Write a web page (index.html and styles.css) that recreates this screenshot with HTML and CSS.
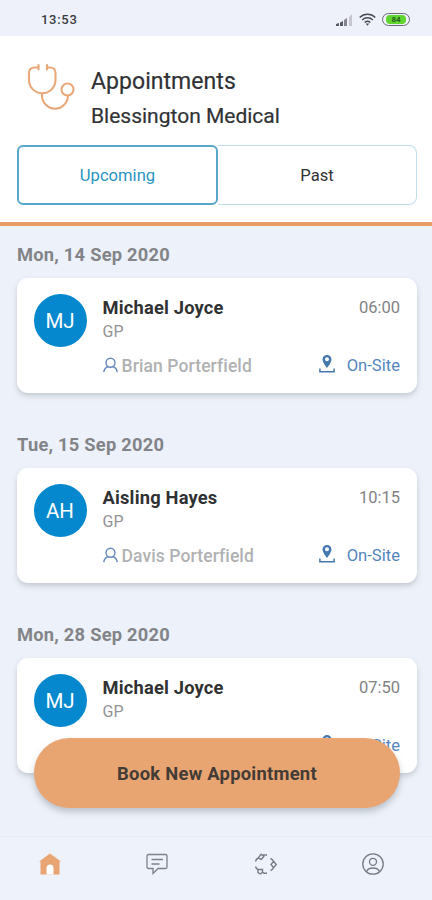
FILE: index.html
```html
<!DOCTYPE html>
<html lang="en">
<head>
<meta charset="utf-8">
<title>Appointments</title>
<link rel="stylesheet" href="styles.css">
</head>
<body>
<svg class="defs" width="0" height="0">
  <symbol id="person" viewBox="0 0 16 16"><g fill="none" stroke="currentColor" stroke-width="1.5"><circle cx="8" cy="5.6" r="4.8"/><path d="M.8 15.500c.6-3.200 2.200-5 4.600-5.900M15.200 15.500c-.6-3.200-2.200-5-4.600-5.900"/></g></symbol>
  <symbol id="pin" viewBox="0 0 16 18"><path fill="currentColor" fill-rule="evenodd" d="M8 0a4.500 4.500 0 0 0-4.500 4.500C3.500 7.500 8 13 8 13s4.500-5.500 4.500-8.500A4.500 4.500 0 0 0 8 0zm0 2.300a2 2 0 1 1 0 4 2 2 0 0 1 0-4z"/><path fill="none" stroke="currentColor" stroke-width="1.500" d="M.9 13.500v3.200h14.200v-3.200"/></symbol>
</svg>
<div class="app">
  <div class="status">
    <span class="clock">13:53</span>
    <svg class="signal" width="17" height="12" viewBox="0 0 17 12"><path fill="#555a64" d="M0 12v-2l3-1v3zM4 12V8.500L7 7v5z"/><path fill="#85868f" d="M8 12V6l3-2v8z"/><path fill="#c6c7d0" d="M13 12V3l3-3v12z"/></svg>
    <svg class="wifi" width="17" height="13" viewBox="0 0 17 13"><g fill="none" stroke="#494c53" stroke-width="1.500"><path d="M.7 4.500a11 11 0 0 1 15.600 0M3.200 7a7.500 7.500 0 0 1 10.600 0M5.700 9.500a4 4 0 0 1 5.600 0"/></g><path fill="#494c53" d="M6.700 10.500h3.600L8.500 12.700z"/></svg>
    <span class="battery"><span class="charge">84</span></span>
  </div>
  <header class="header">
    <div class="heading">
      <svg class="steth" width="48" height="48" viewBox="0 0 48 48" fill="none" stroke="#eaa878" stroke-width="2.100"><path d="M11.500 4.500H7.500Q2 4.500 2 10V17a13 13 0 0 0 26.500 0V10Q28.500 4.500 23 4.500H20"/><path d="M11.500 1.200v6M20 1.200v6M15 30v2.500a13 13.200 0 0 0 26 0"/><circle cx="40.500" cy="26.500" r="6"/></svg>
      <div class="titles"><div class="title">Appointments</div><div class="practice">Blessington Medical</div></div>
    </div>
    <div class="tabs"><div class="tab active">Upcoming</div><div class="tab past">Past</div></div>
  </header>
  <main class="list">
    <div class="date">Mon, 14 Sep 2020</div>
    <div class="card">
      <div class="avatar">MJ</div>
      <div class="info">
        <div class="row"><span class="name">Michael Joyce</span><span class="time">06:00</span></div>
        <div class="role">GP</div>
        <div class="row meta"><svg class="person"><use href="#person"/></svg><span class="patient">Brian Porterfield</span><svg class="pin"><use href="#pin"/></svg><span class="place">On-Site</span></div>
      </div>
    </div>
    <div class="date">Tue, 15 Sep 2020</div>
    <div class="card">
      <div class="avatar">AH</div>
      <div class="info">
        <div class="row"><span class="name">Aisling Hayes</span><span class="time">10:15</span></div>
        <div class="role">GP</div>
        <div class="row meta"><svg class="person"><use href="#person"/></svg><span class="patient">Davis Porterfield</span><svg class="pin"><use href="#pin"/></svg><span class="place">On-Site</span></div>
      </div>
    </div>
    <div class="date">Mon, 28 Sep 2020</div>
    <div class="card">
      <div class="avatar">MJ</div>
      <div class="info">
        <div class="row"><span class="name">Michael Joyce</span><span class="time">07:50</span></div>
        <div class="role">GP</div>
        <div class="row meta"><svg class="pin"><use href="#pin"/></svg><span class="place">On-Site</span></div>
      </div>
    </div>
  </main>
  <nav class="nav">
    <svg width="22" height="22" viewBox="0 0 22 22"><path fill="#e9a473" d="M11 .5L22 8.500H20.500V21.500H1.500V8.500H0z"/><path fill="#fff" d="M7.500 21.500V15a3.500 3.500 0 0 1 7 0v6.500z"/></svg>
    <svg width="22" height="22" viewBox="0 0 22 22" fill="none" stroke="#7d828b" stroke-width="1.300"><path d="M2.500 1.500h17Q21 1.500 21 3v11q0 1.500-1.500 1.500H12L7 20.500V15.500H2.500Q1 15.500 1 14V3Q1 1.500 2.500 1.500zM5.500 6.500h11.500M5.500 11h8"/></svg>
    <svg width="24" height="24" viewBox="0 0 24 24" fill="none" stroke="#777c84" stroke-width="1.400"><path d="M8 2.200l2.800 2.300-2.500 3-3-1.500zM5.300 6Q3 7 2.500 9.500M9.500 3h4.500"/><path d="M5 17.500h4.500v2.800L7.500 22 5 20.500zM5 17.500Q3 16.500 2.500 14.500M9.500 20l1.500 1.200h3"/><path d="M20.500 9.300l2.800 3.200-2.800 3.200-2.500-3.200zM17.500 6.500q2 .8 3 2.800M17.500 18.500q2-.8 3-2.800"/></svg>
    <svg width="22" height="22" viewBox="0 0 22 22" fill="none" stroke="#777c84" stroke-width="1.300"><circle cx="11" cy="11" r="10.200"/><circle cx="11" cy="8.800" r="3.500"/><path d="M4.500 18.500q1.500-3.500 6.500-3.500t6.500 3.500"/></svg>
  </nav>
  <div class="book">Book New Appointment</div>
</div>
</body>
</html>
```
FILE: styles.css
```css
* { box-sizing: border-box; }
body { margin: 0; font-family: Roboto, "Liberation Sans", sans-serif; background: #edf1f9; }
.defs { position: absolute; }
.app { position: relative; width: 432px; height: 900px; overflow: hidden; display: flex; flex-direction: column; }
.status { height: 36px; flex: none; background: #eef1fa; display: flex; align-items: center; padding: 3px 22px 0 41px; color: #3a3c42; }
.clock { flex: 1; font-size: 13px; font-weight: 500; letter-spacing: .7px; }
.wifi { margin: 0 6px 0 6px; }
.battery { width: 28px; height: 13px; border: 1.500px solid #666a70; border-radius: 7px; padding: 1px 3px; }
.charge { display: block; height: 9px; border-radius: 4px; background: #60d52e; font-size: 8px; line-height: 9px; font-weight: 700; text-align: center; color: #26611b; }
.header { height: 190px; flex: none; background: #fff; border-bottom: 4px solid #e79b67; padding: 27px 15px 0 17px; }
.heading { display: flex; height: 82px; padding-left: 10px; }
.titles { margin-left: 16px; padding-top: 1px; color: #303134; white-space: nowrap; -webkit-text-stroke: .2px; }
.title { font-size: 23px; line-height: 35px; letter-spacing: .05px; }
.practice { font-size: 21px; line-height: 35px; }
.tabs { display: flex; height: 60px; width: 400px; }
.tab { flex: 1; display: flex; align-items: center; justify-content: center; font-size: 16.600px; color: #303134; border: 1.500px solid #bfdee8; border-left: 0; border-radius: 0 8px 8px 0; }
.tab.active { flex: none; width: 201px; color: #2a93bf; border: 2px solid #59a7ca; border-radius: 6px; }
.list { padding: 0 15px 0 17px; flex: 1; min-height: 0; }
.date { height: 52px; padding-top: 16px; line-height: 26px; font-size: 18.300px; font-weight: 700; letter-spacing: .25px; color: #828488; }
.card { height: 115px; width: 400px; margin-bottom: 23px; background: #fff; border-radius: 11px; box-shadow: 0 3px 5px #b5bcc5b3; display: flex; padding: 16px 17px; }
.avatar { width: 53px; height: 53px; flex: none; border-radius: 50%; background: #0588cd; color: #fff; font-size: 20.500px; line-height: 55px; text-align: center; margin-left: -.5px; }
.info { flex: 1; margin-left: 16px; }
.row { display: flex; justify-content: space-between; height: 28px; line-height: 28px; }
.name { font-size: 18.300px; font-weight: 700; letter-spacing: .2px; color: #303133; }
.time { font-size: 16.500px; color: #818286; }
.role { font-size: 16px; line-height: 20px; color: #929396; }
.meta { height: 28px; margin-top: 10px; line-height: 28px; align-items: center; justify-content: flex-start; }
.person { width: 15px; height: 16px; color: #6688bd; margin-right: 4px; margin-top: -2px; }
.patient { font-size: 17.500px; font-weight: 500; letter-spacing: .1px; color: #b0b1b3; }
.pin { width: 16px; height: 18px; color: #4478ae; margin-left: auto; margin-right: 12px; margin-top: -5px; }
.place { font-size: 16.600px; color: #5486be; }
.nav { height: 64px; flex: none; border-top: 1px solid #e8edf3; background: #eef2fa; display: flex; align-items: center; justify-content: space-between; padding: 0 48px 9px 39px; }
.nav svg { flex: none; }
.book { position: absolute; left: 34px; top: 738px; width: 366px; height: 70px; border-radius: 35px; background: #e8a572; box-shadow: 0 4px 6px #919ba58c; display: flex; align-items: center; justify-content: center; font-size: 18.400px; font-weight: 700; letter-spacing: .25px; color: #433c36; }
```
